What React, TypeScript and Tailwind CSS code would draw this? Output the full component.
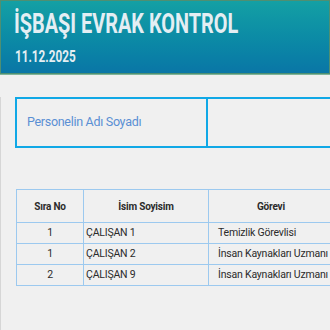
const font = { fontFamily: "Roboto, 'Noto Sans', sans-serif" };

const rows = [
  { no: "1", name: "ÇALIŞAN 1", job: "Temizlik Görevlisi" },
  { no: "1", name: "ÇALIŞAN 2", job: "İnsan Kaynakları Uzmanı" },
  { no: "2", name: "ÇALIŞAN 9", job: "İnsan Kaynakları Uzmanı" },
];

export default function App() {
  return (
    <div className="w-[330px] h-[330px] overflow-hidden bg-[#f0f0f0]" style={font}>
      {/* Header */}
      <div className="h-[74px] border border-[#4f8f72] bg-gradient-to-b from-[#14a0a4] to-[#0a76a6] pl-[13px] pt-[7px] shadow-[0_1px_0_#7fb59a]">
        <div className="whitespace-nowrap">
          <span className="inline-block origin-left scale-x-[0.71] text-[28px] leading-[32px] font-bold text-[#e4eef3]">
            İŞBAŞI EVRAK KONTROL
          </span>
        </div>
        <div className="mt-[5px] pl-[1px] whitespace-nowrap">
          <span className="inline-block origin-left scale-x-[0.69] text-[17px] leading-[20px] font-bold text-[#e4eef3]">
            11.12.2025
          </span>
        </div>
      </div>

      <div className="border-l border-[#d6d6d6] h-full">
        {/* Name box */}
        <div className="ml-[14px] mt-[23px] flex w-[340px] h-[51px] border-2 border-[#10a8e6]">
          <div className="w-[191px] border-r-2 border-[#10a8e6] flex items-center pl-[10px] text-[12.5px] tracking-[-0.3px] text-[#5a8fd4]">
            Personelin Adı Soyadı
          </div>
          <div className="flex-1" />
        </div>

        {/* Table */}
        <table className="ml-[15px] mt-[41px] border-collapse text-[10.5px] tracking-[-0.2px] text-[#2b2b2b] w-[340px] table-fixed">
          <colgroup>
            <col className="w-[67px]" />
            <col className="w-[125px]" />
            <col />
          </colgroup>
          <thead>
            <tr className="h-[33px]">
              <th className="border border-[#9cc9ef] font-bold text-[10px]">Sıra No</th>
              <th className="border border-[#9cc9ef] font-bold text-[10px]">İsim Soyisim</th>
              <th className="border border-[#9cc9ef] font-bold text-[10px] text-left pl-[48px]">Görevi</th>
            </tr>
          </thead>
          <tbody>
            {rows.map((r, i) => (
              <tr key={i} className="h-[21px]">
                <td className="border border-[#9cc9ef] text-center">{r.no}</td>
                <td className="border border-[#9cc9ef] pl-[2px]">{r.name}</td>
                <td className="border border-[#9cc9ef] pl-[9px] whitespace-nowrap overflow-hidden">{r.job}</td>
              </tr>
            ))}
          </tbody>
        </table>
      </div>
    </div>
  );
}
